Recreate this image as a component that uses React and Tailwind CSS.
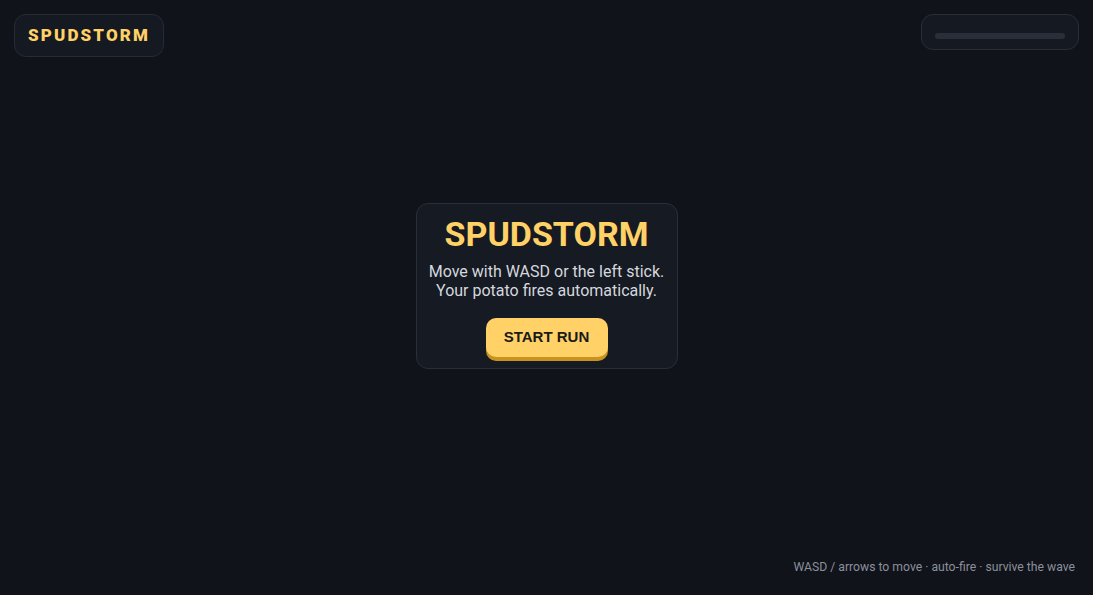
import React from "react";

const App = () => {
  return (
    <div
      className="relative h-screen w-full overflow-hidden bg-[#10131a] text-white"
      style={{ fontFamily: "Roboto, 'Noto Sans', sans-serif" }}
    >
      {/* HUD overlay */}
      <div className="absolute left-[14px] top-[14px] flex h-[43px] items-center rounded-[12px] border border-[#272b35] bg-[#151921] px-[13px]">
        <span className="text-[17px] font-black tracking-[0.125em] text-[#ffd166]">SPUDSTORM</span>
      </div>
      <div className="absolute right-[14px] top-[14px] flex h-[36px] w-[158px] items-center rounded-[12px] border border-[#2a2e38] bg-[#151921] px-[13px] pt-[7px]">
        <div className="h-[6px] w-full rounded-full bg-[#2a2e39]" />
      </div>

      <div className="flex h-full w-full items-center justify-center pb-[24px]">
        <div className="flex w-[262px] flex-col items-center rounded-[12px] border border-[#2a2e38] bg-[#161a22] pb-[11px] pt-[9px]">
          <h1 className="text-[34px] font-bold leading-[42px] text-[#ffd166]">SPUDSTORM</h1>
          <p className="mt-[7px] text-center text-[16px] leading-[19px] text-[#d4d7de]">
            Move with WASD or the left stick.
            <br />
            Your potato fires automatically.
          </p>
          <button
            className="mt-[18px] h-[39px] w-[122px] rounded-[10px] bg-[#ffd166] text-[15px] font-bold text-[#1a1a1a] shadow-[0_4px_0_#c8931f]"
            style={{ fontFamily: "'Liberation Sans', Arial, sans-serif" }}
          >
            START RUN
          </button>
        </div>
      </div>

      <div className="absolute bottom-[19px] right-[18px] text-[12.2px] text-[#8b909b]">
        WASD / arrows to move · auto-fire · survive the wave
      </div>
    </div>
  );
};

export default App;
